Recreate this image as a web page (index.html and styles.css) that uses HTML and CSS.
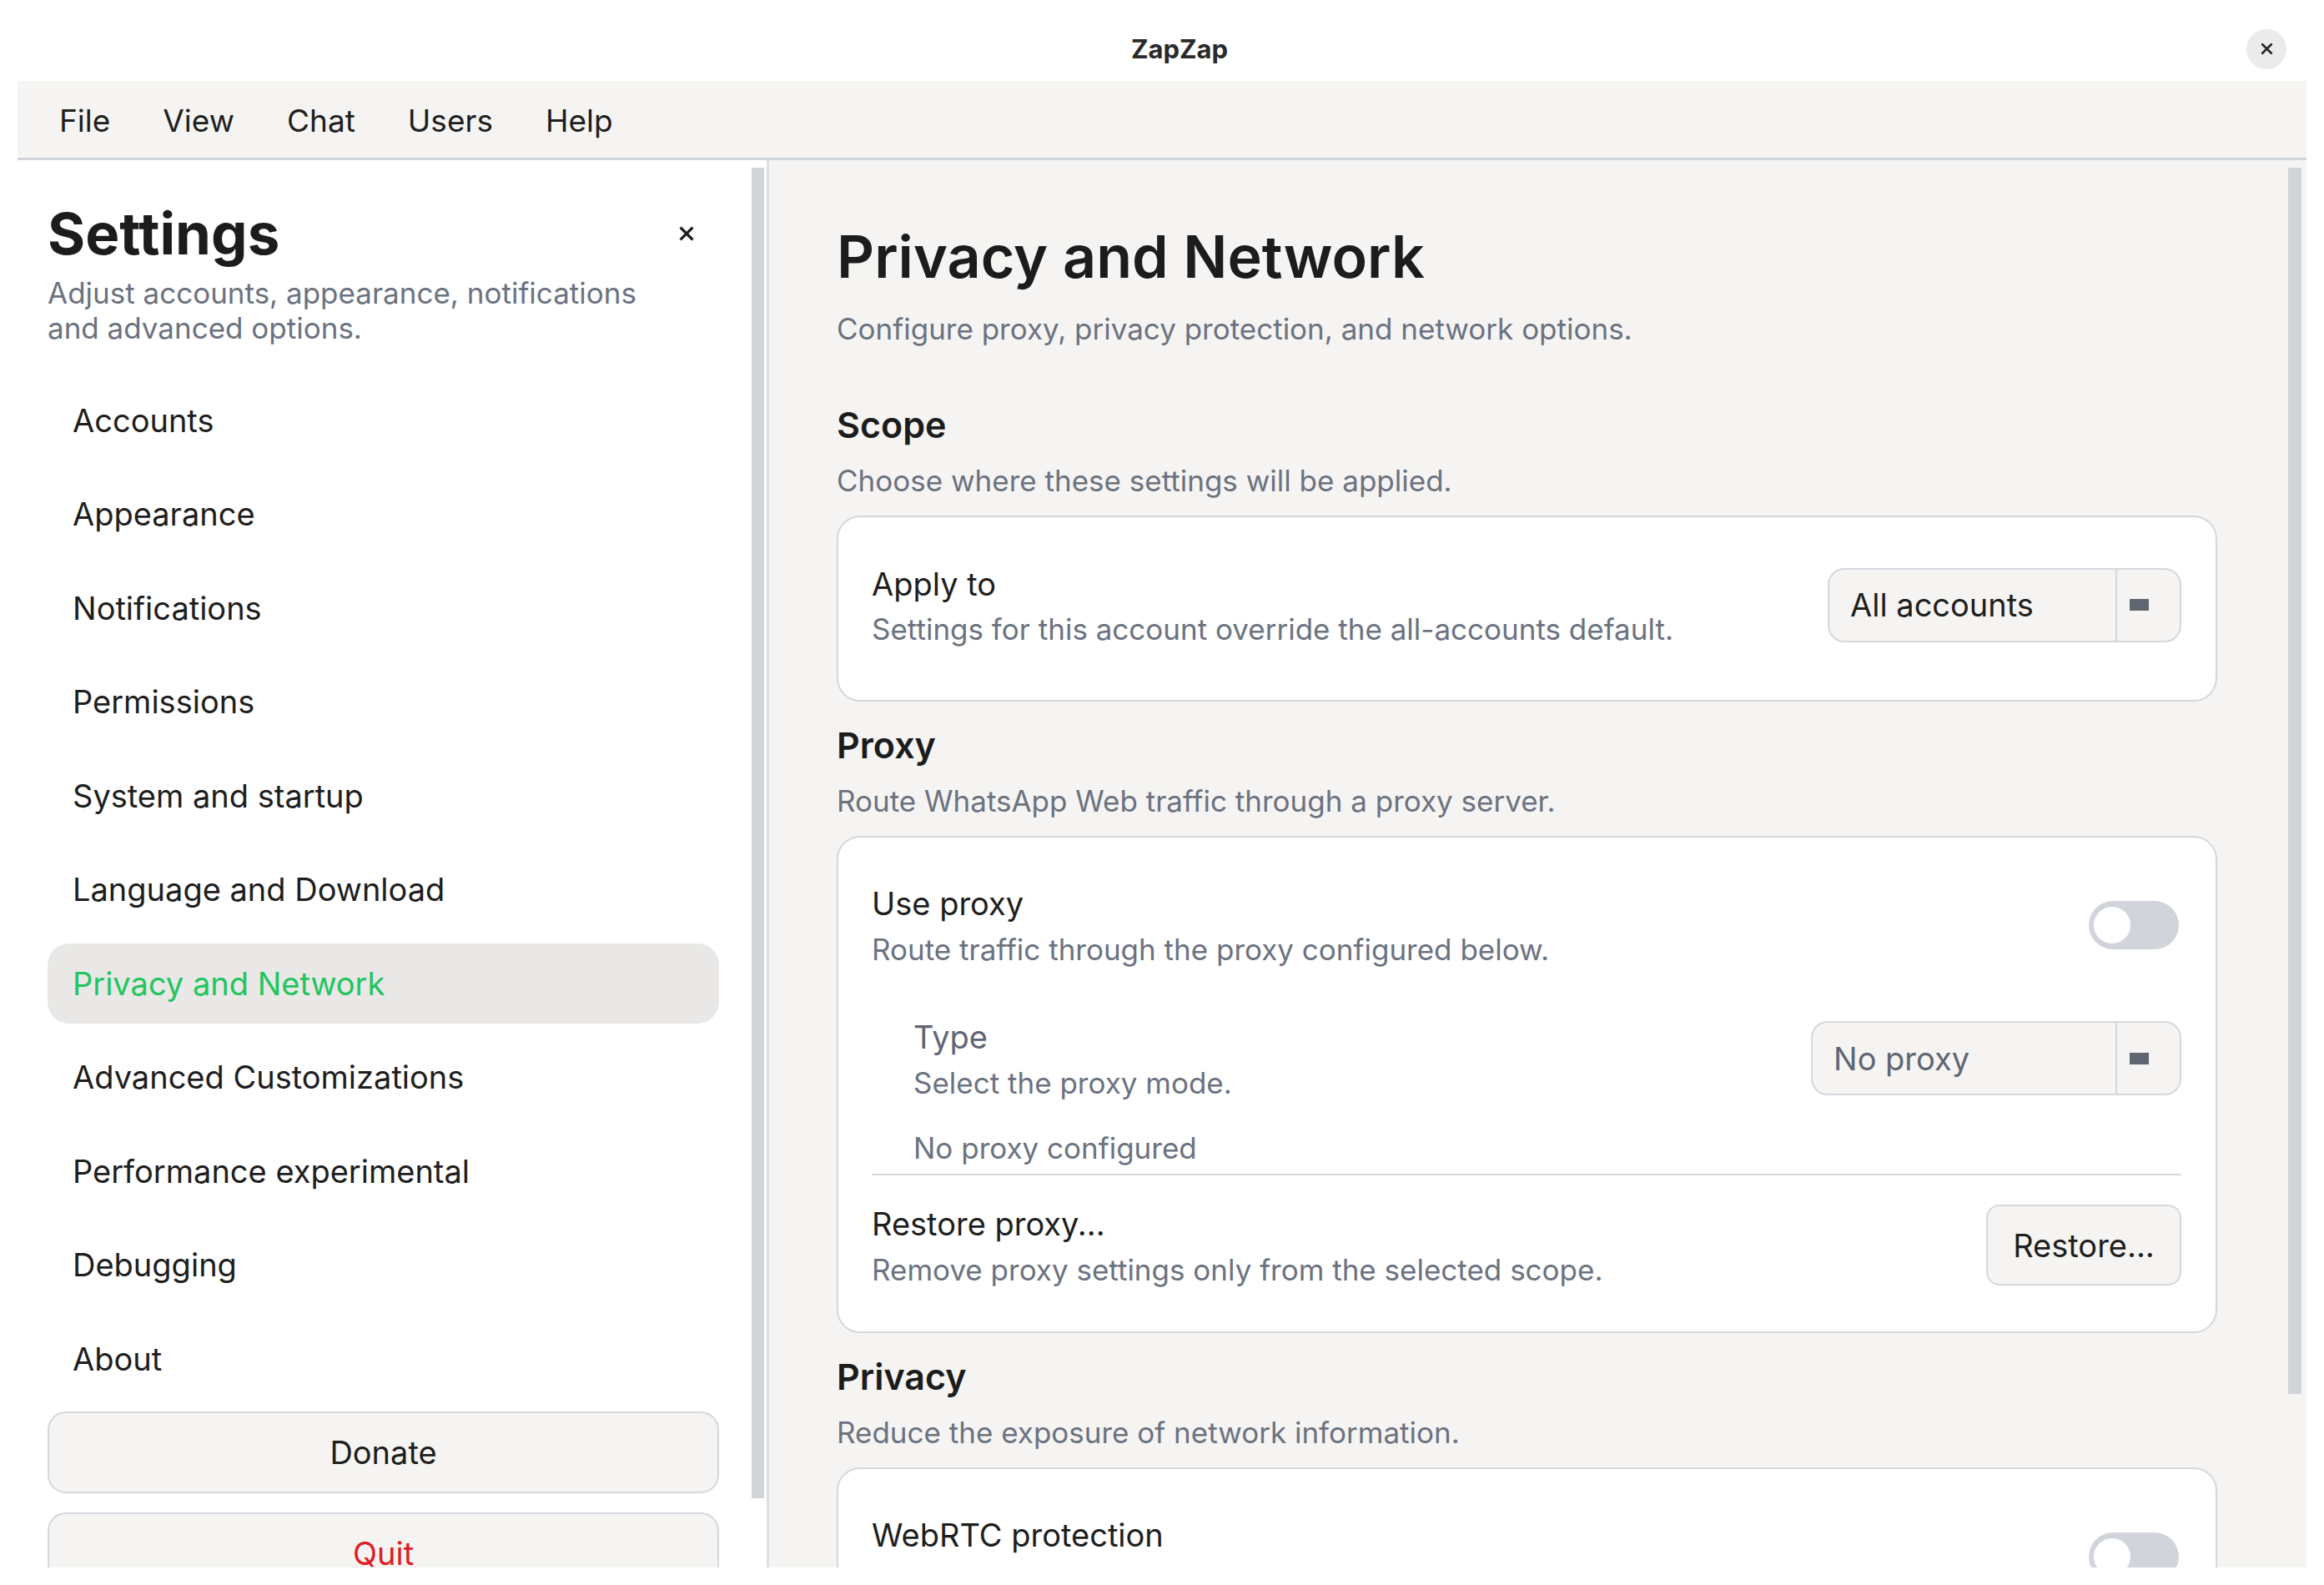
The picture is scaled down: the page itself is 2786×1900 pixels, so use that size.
FILE: index.html
```html
<!DOCTYPE html>
<html>
<head>
    <link rel="stylesheet" href="styles.css">
</head>
<body>
    <header class="titlebar">
        <span class="app-title">ZapZap</span>
        <button class="win-close">
            <svg width="17" height="17" viewBox="0 0 16 16"><path d="M3 3L13 13M13 3L3 13" stroke="#2b2b2b" stroke-width="2.6" stroke-linecap="round" fill="none"/></svg>
        </button>
    </header>

    <div class="window">
        <nav class="menubar">
            <span>File</span>
            <span>View</span>
            <span>Chat</span>
            <span>Users</span>
            <span>Help</span>
        </nav>

        <div class="panes">
            <aside class="sidebar">
                <div class="sidebar-inner">
                    <div class="sidebar-head">
                        <h1>Settings</h1>
                        <button class="panel-close">
                            <svg width="20" height="20" viewBox="0 0 16 16"><path d="M3 3L13 13M13 3L3 13" stroke="#1e1e1e" stroke-width="2.6" stroke-linecap="square" fill="none"/></svg>
                        </button>
                    </div>
                    <p class="sidebar-sub">Adjust accounts, appearance, notifications and advanced options.</p>

                    <ul class="nav">
                        <li>Accounts</li>
                        <li>Appearance</li>
                        <li>Notifications</li>
                        <li>Permissions</li>
                        <li>System and startup</li>
                        <li>Language and Download</li>
                        <li class="active">Privacy and Network</li>
                        <li>Advanced Customizations</li>
                        <li>Performance experimental</li>
                        <li>Debugging</li>
                        <li>About</li>
                    </ul>

                    <button class="side-btn donate">Donate</button>
                    <button class="side-btn quit">Quit</button>
                </div>
                <div class="scrollbar"><div class="thumb side-thumb"></div></div>
            </aside>

            <main class="content">
                <div class="page">
                    <h1 class="page-title">Privacy and Network</h1>
                    <p class="page-sub">Configure proxy, privacy protection, and network options.</p>

                    <!-- Scope -->
                    <h2 class="section-title first">Scope</h2>
                    <p class="section-desc">Choose where these settings will be applied.</p>
                    <div class="card scope-card">
                        <div class="row">
                            <div class="row-text">
                                <div class="row-title">Apply to</div>
                                <div class="row-desc">Settings for this account override the all-accounts default.</div>
                            </div>
                            <div class="combo combo-scope">
                                <div class="combo-value">All accounts</div>
                                <div class="combo-arrow"><span class="combo-icon"></span></div>
                            </div>
                        </div>
                    </div>

                    <!-- Proxy -->
                    <h2 class="section-title">Proxy</h2>
                    <p class="section-desc">Route WhatsApp Web traffic through a proxy server.</p>
                    <div class="card">
                        <div class="row">
                            <div class="row-text">
                                <div class="row-title">Use proxy</div>
                                <div class="row-desc">Route traffic through the proxy configured below.</div>
                            </div>
                            <div class="toggle"><span class="knob"></span></div>
                        </div>

                        <div class="row sub-row">
                            <div class="row-text">
                                <div class="row-title muted">Type</div>
                                <div class="row-desc">Select the proxy mode.</div>
                            </div>
                            <div class="combo combo-type">
                                <div class="combo-value muted">No proxy</div>
                                <div class="combo-arrow"><span class="combo-icon"></span></div>
                            </div>
                        </div>
                        <div class="proxy-status">No proxy configured</div>

                        <div class="divider"></div>

                        <div class="row restore-row">
                            <div class="row-text">
                                <div class="row-title">Restore proxy...</div>
                                <div class="row-desc">Remove proxy settings only from the selected scope.</div>
                            </div>
                            <button class="restore-btn">Restore...</button>
                        </div>
                    </div>

                    <!-- Privacy -->
                    <h2 class="section-title">Privacy</h2>
                    <p class="section-desc">Reduce the exposure of network information.</p>
                    <div class="card">
                        <div class="row top-row">
                            <div class="row-text">
                                <div class="row-title">WebRTC protection</div>
                            </div>
                            <div class="toggle low"><span class="knob"></span></div>
                        </div>
                    </div>
                </div>
                <div class="scrollbar main-scroll"><div class="thumb main-thumb"></div></div>
            </main>
        </div>
    </div>
</body>
</html>
```

FILE: styles.css
```css
* {
    box-sizing: border-box;
}
body {
    margin: 0;
    width: 2786px;
    height: 1900px;
    overflow: hidden;
    background: #ffffff;
    font-family: Inter, "Noto Sans", sans-serif;
    color: #1e1e1e;
}
button {
    font-family: inherit;
    cursor: pointer;
}

/* title bar */
.titlebar {
    height: 97px;
    padding-top: 20px;
    display: grid;
    grid-template-columns: 1fr auto 1fr;
    align-items: center;
    background: #ffffff;
}
.app-title {
    grid-column: 2;
    padding-left: 42px;
    font-size: 31px;
    font-weight: 700;
    color: #2a2a2a;
}
.win-close {
    grid-column: 3;
    justify-self: end;
    margin-right: 45px;
    width: 48px;
    height: 48px;
    border: none;
    border-radius: 50%;
    background: #ebebeb;
    display: flex;
    align-items: center;
    justify-content: center;
    padding: 0;
}

/* window */
.window {
    margin: 0 21px;
    height: 1782px;
    overflow: hidden;
    display: flex;
    flex-direction: column;
}
.menubar {
    height: 95px;
    flex-shrink: 0;
    display: flex;
    align-items: center;
    gap: 63px;
    padding: 3px 0 0 50px;
    background: #f5f4f2;
    border-bottom: 3px solid #cfd3d8;
    font-size: 37px;
}
.panes {
    flex: 1;
    display: flex;
    min-height: 0;
}

/* sidebar */
.sidebar {
    width: 898px;
    flex-shrink: 0;
    display: flex;
    background: #ffffff;
}
.sidebar-inner {
    flex: 1;
    padding: 50px 39px 0 36px;
}
.sidebar-head {
    display: flex;
    align-items: center;
    justify-content: space-between;
}
.sidebar-head h1 {
    margin: 0;
    font-size: 69px;
    line-height: 76px;
    font-weight: 700;
    color: #1c1c1c;
}
.panel-close {
    width: 50px;
    height: 50px;
    margin-right: 14px;
    border: none;
    background: none;
    padding: 0;
    display: flex;
    align-items: center;
    justify-content: center;
}
.sidebar-sub {
    margin: 12px 0 0;
    max-width: 740px;
    font-size: 35px;
    line-height: 42px;
    color: #6b7280;
}
.nav {
    list-style: none;
    margin: 41.5px 0 0;
    padding: 0;
    display: flex;
    flex-direction: column;
    gap: 16.5px;
}
.nav li {
    height: 96px;
    display: flex;
    align-items: center;
    padding-left: 30px;
    border-radius: 26px;
    font-size: 38px;
    color: #1e1e1e;
}
.nav li.active {
    background: #e9e8e6;
    color: #22c55e;
}
.side-btn {
    display: block;
    width: 100%;
    height: 98px;
    border: 2px solid #d4d7dc;
    border-radius: 22px;
    background: #f5f4f2;
    font-size: 38px;
    color: #1e1e1e;
}
.donate {
    margin-top: 15px;
}
.quit {
    margin-top: 23px;
    color: #e01b24;
}

/* scrollbars */
.scrollbar {
    width: 15px;
    flex-shrink: 0;
    margin-right: 3px;
}
.thumb {
    width: 100%;
    margin-top: 9px;
    background: #d1d4d9;
}
.side-thumb {
    height: 1595px;
}
.main-scroll {
    width: 16px;
    margin-right: 6px;
}
.main-thumb {
    height: 1470px;
}

/* main content */
.content {
    flex: 1;
    display: flex;
    background: #f5f4f2;
    border-left: 3px solid #dfdfdf;
    min-width: 0;
}
.page {
    flex: 1;
    padding: 74px 85px 0 81px;
}
.page-title {
    margin: 0;
    font-size: 70px;
    line-height: 84px;
    font-weight: 600;
    color: #1c1c1c;
}
.page-sub {
    margin: 21.5px 0 0;
    font-size: 35px;
    line-height: 44px;
    color: #6b7280;
}
.section-title {
    margin: 24px 0 0;
    font-size: 43px;
    line-height: 56px;
    font-weight: 600;
    color: #1c1c1c;
}
.section-title.first {
    margin-top: 65.5px;
}
.section-desc {
    margin: 16.5px 0 0;
    font-size: 35px;
    line-height: 44px;
    color: #6b7280;
}

.card {
    margin-top: 20.5px;
    background: #ffffff;
    border: 2px solid #d4d7dc;
    border-radius: 28px;
    padding: 54px 41px 52.5px 40px;
}
.scope-card {
    padding-top: 54.5px;
    padding-bottom: 63px;
}
.row {
    display: flex;
    align-items: center;
    justify-content: space-between;
}
.top-row {
    align-items: flex-start;
}
.row-title {
    font-size: 38px;
    line-height: 50px;
    color: #1e1e1e;
}
.row-title.muted {
    color: #5f6673;
}
.row-desc {
    margin-top: 7.5px;
    font-size: 35px;
    line-height: 44px;
    color: #6b7280;
}
.sub-row {
    margin-top: 58.5px;
    padding-left: 50px;
}
.proxy-status {
    margin-top: 34.5px;
    padding-left: 50px;
    font-size: 35px;
    line-height: 44px;
    color: #6b7280;
}
.divider {
    margin-top: 9px;
    height: 2px;
    background: #d4d7dc;
}
.restore-row {
    margin-top: 33px;
}

/* controls */
.combo {
    display: flex;
    height: 89px;
    border: 2px solid #d4d7dc;
    border-radius: 20px;
    background: #f5f4f2;
    flex-shrink: 0;
}
.combo-scope {
    width: 424px;
}
.combo-type {
    width: 444px;
}
.combo-value {
    flex: 1;
    display: flex;
    align-items: center;
    padding-left: 25px;
    font-size: 38px;
    color: #1e1e1e;
}
.combo-value.muted {
    color: #5f6673;
}
.combo-arrow {
    width: 77px;
    border-left: 2px solid #d4d7dc;
    display: flex;
    align-items: center;
    padding-left: 15px;
}
.combo-icon {
    width: 23px;
    height: 14px;
    background: #5f6670;
}
.toggle {
    width: 108px;
    height: 58px;
    margin-right: 3px;
    border-radius: 29px;
    background: #d1d5db;
    display: flex;
    align-items: center;
    padding-left: 6px;
    flex-shrink: 0;
}
.toggle.low {
    margin-top: 22px;
}
.knob {
    width: 44px;
    height: 44px;
    border-radius: 50%;
    background: #ffffff;
}
.restore-btn {
    width: 234px;
    height: 97px;
    border: 2px solid #d4d7dc;
    border-radius: 16px;
    background: #f5f4f2;
    font-size: 38px;
    color: #1e1e1e;
    flex-shrink: 0;
}
```
